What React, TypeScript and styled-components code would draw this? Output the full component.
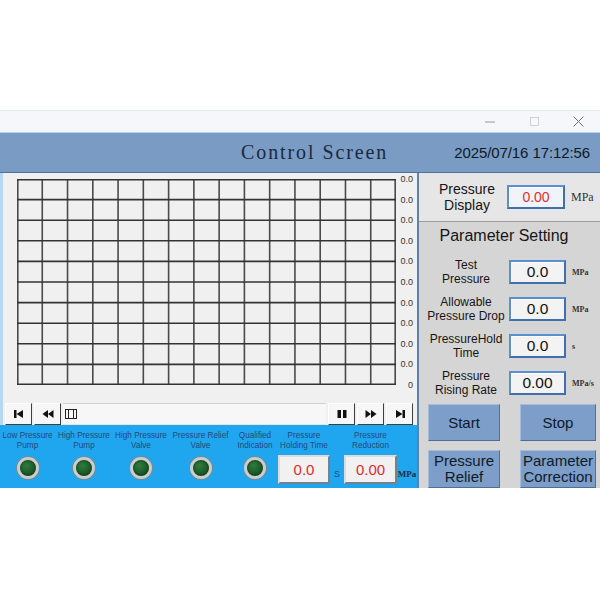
import React from "react"
import styled, { createGlobalStyle } from "styled-components"

const GlobalStyle = createGlobalStyle`
  html, body {
    margin: 0;
    padding: 0;
    background: #fff;
  }
  body {
    font-family: "Liberation Sans", Arial, sans-serif;
  }
  * {
    box-sizing: border-box;
  }
`

const Page = styled.div`
  width: 600px;
  height: 600px;
  padding-top: 110px;
  background: #fff;
  overflow: hidden;
`
const Window = styled.div`
  display: flex;
  flex-flow: column;
  width: 600px;
`
const TitleBar = styled.div`
  display: flex;
  justify-content: flex-end;
  align-items: center;
  height: 23px;
  border-top: 1px solid #e6e9ec;
  border-bottom: 1px solid #bcd2ea;
  background: #f5f7fa;
`
const WinButton = styled.div`
  display: flex;
  justify-content: center;
  align-items: center;
  width: 44px;
  height: 100%;
`
const Header = styled.div`
  display: flex;
  align-items: center;
  height: 40px;
  border-bottom: 1px solid #4f719a;
  background: #7a9bc4;
`
const ScreenTitle = styled.div`
  flex: 1;
  padding-left: 175px;
  color: #1a2a3e;
  font-family: "Liberation Serif", "Times New Roman", serif;
  font-size: 20px;
  letter-spacing: 1.9px;
  text-align: center;
`
const Clock = styled.div`
  padding-right: 10px;
  color: #101820;
  font-size: 15px;
  letter-spacing: -0.1px;
`
const Main = styled.div`
  display: flex;
  height: 315px;
`
const LeftColumn = styled.div`
  display: flex;
  flex-flow: column;
  width: 417px;
`
const ChartPanel = styled.div`
  display: flex;
  flex-flow: column;
  height: 252px;
  padding: 6px 4px 3px 14px;
  border-left: 3px solid #b7d7f2;
  background: #f0f0f0;
`
const ChartBody = styled.div`
  display: flex;
  align-items: flex-start;
`
const YAxis = styled.div`
  display: flex;
  flex-flow: column;
  justify-content: space-between;
  align-items: flex-end;
  width: 14px;
  height: 216px;
  margin-top: -5px;
  margin-left: 3px;
  color: #333;
  font-size: 9px;
  line-height: 10px;
`
const Toolbar = styled.div`
  display: flex;
  align-items: center;
  gap: 2px;
  height: 24px;
  margin-top: 13px;
  margin-left: -12px;
`
const ToolButton = styled.div`
  display: flex;
  justify-content: center;
  align-items: center;
  flex-shrink: 0;
  width: 27px;
  height: 22px;
  border-top: 1px solid #fff;
  border-left: 1px solid #fff;
  border-right: 1px solid #3e3e3e;
  border-bottom: 1px solid #3e3e3e;
  background: #f6f6f6;
`
const Track = styled.div`
  display: flex;
  align-items: center;
  flex: 1;
  height: 22px;
  padding-left: 2px;
  border-top: 1px solid #d2d2d2;
  border-bottom: 1px solid #e4e4e4;
  background: #f7f7f7;
`
const Thumb = styled.div`
  display: flex;
  justify-content: center;
  width: 12px;
  height: 10px;
  border: 1px solid #222;
  background: #fafafa;

  &::after {
    content: "";
    width: 4px;
    height: 100%;
    border-left: 1px solid #222;
    border-right: 1px solid #222;
  }
`
const StatusBar = styled.div`
  display: flex;
  align-items: flex-start;
  height: 63px;
  padding-top: 6px;
  background: #20a6ef;
`
const LampItem = styled.div<{ $width: number }>`
  display: flex;
  flex-flow: column;
  align-items: center;
  flex-shrink: 0;
  width: ${p => p.$width}px;
`
const StatusLabel = styled.div`
  height: 20px;
  color: #24497a;
  font-size: 8.2px;
  line-height: 10px;
  text-align: center;
  white-space: nowrap;
`
const Lamp = styled.div`
  width: 22px;
  height: 22px;
  margin-top: 6px;
  border: 3px solid #c9cdcd;
  border-radius: 50%;
  box-shadow: 0 0 0 1px #7c8a8a, inset 0 0 2px #06200c;
  background: radial-gradient(circle at 40% 35%, #2f7c3d, #1b5727 60%, #123d1b);
`
const ValueItem = styled.div`
  display: flex;
  align-items: flex-end;
  flex-shrink: 0;
`
const ValueColumn = styled.div`
  display: flex;
  flex-flow: column;
  align-items: center;
`
const StatusBox = styled.div<{ $width: number }>`
  display: flex;
  justify-content: center;
  align-items: center;
  width: ${p => p.$width}px;
  height: 29px;
  margin-top: 4px;
  border: 2px solid;
  border-color: #dcdcdc #74828f #74828f #dcdcdc;
  color: #e22c2c;
  font-size: 15px;
  background: #f1f1f1;
`
const StatusUnit = styled.div<{ $width: number; $serif?: boolean }>`
  width: ${p => p.$width}px;
  padding-bottom: 5px;
  color: ${p => (p.$serif ? "#1c2a40" : "#2a4d80")};
  font-family: ${p => (p.$serif ? '"Liberation Serif", "Times New Roman", serif' : '"Liberation Sans", Arial, sans-serif')};
  font-size: 9px;
  font-weight: ${p => (p.$serif ? "bold" : "normal")};
  text-align: center;
`
const Divider = styled.div`
  width: 2px;
  background: #5f80a8;
`
const RightColumn = styled.div`
  display: flex;
  flex-flow: column;
  flex: 1;
`
const DisplaySection = styled.div`
  display: flex;
  align-items: center;
  height: 49px;
  padding-left: 8px;
  border-bottom: 1px solid #9d9d9d;
  background: #e6e6e6;
`
const FieldLabel = styled.div<{ $width: number; $size: number }>`
  width: ${p => p.$width}px;
  color: #151515;
  font-size: ${p => p.$size}px;
  line-height: ${p => p.$size + 2}px;
  text-align: center;
  white-space: nowrap;
`
const FieldBox = styled.div<{ $width: number; $red?: boolean }>`
  display: flex;
  justify-content: center;
  align-items: center;
  width: ${p => p.$width}px;
  height: 24px;
  border: 2px solid;
  border-color: #5a8fd2 #3f6fae #3f6fae #5a8fd2;
  box-shadow: inset 1px 1px 0 #ffffff;
  color: ${p => (p.$red ? "#e1302e" : "#111")};
  font-size: ${p => (p.$red ? 14 : 15.5)}px;
  background: ${p => (p.$red ? "#f0f4f8" : "#f3f3f3")};
`
const FieldUnit = styled.div<{ $size: number }>`
  margin-left: 6px;
  color: #333;
  font-family: "Liberation Serif", "Times New Roman", serif;
  font-size: ${p => p.$size}px;
  font-weight: ${p => (p.$size < 10 ? "bold" : "normal")};
`
const ParamSection = styled.div`
  display: flex;
  flex-flow: column;
  flex: 1;
  padding-top: 4px;
  background: #d5d5d5;
`
const SectionTitle = styled.div`
  padding-right: 11px;
  color: #151515;
  font-size: 16px;
  line-height: 20px;
  text-align: center;
`
const ParamList = styled.div`
  display: flex;
  flex-flow: column;
  gap: 3px;
  margin-top: 9px;
`
const ParamRow = styled.div`
  display: flex;
  align-items: center;
  height: 34px;
  padding-left: 5px;

  > :nth-child(2) {
    margin-left: 1px;
  }
`
const ButtonGrid = styled.div`
  display: grid;
  grid-template-columns: 72px 76px;
  grid-template-rows: 37px 38px;
  column-gap: 20px;
  row-gap: 9px;
  margin-top: 4px;
  padding-left: 9px;
`
const ActionButton = styled.button.attrs({ type: "button" })`
  display: flex;
  justify-content: center;
  align-items: center;
  padding: 0;
  border: 1px solid;
  border-color: #a4bddd #4f6f98 #4f6f98 #a4bddd;
  color: #0f1a28;
  font-family: "Liberation Sans", Arial, sans-serif;
  font-size: 15px;
  line-height: 16px;
  background: #7c9ec8;
`

const lamps = [
  { label: ["Low Pressure", "Pump"], width: 55 },
  { label: ["High Pressure", "Pump"], width: 58 },
  { label: ["High Pressure", "Valve"], width: 56 },
  { label: ["Pressure Relief", "Valve"], width: 63 },
  { label: ["Qualified", "Indication"], width: 46 },
]

const params = [
  { label: ["Test", "Pressure"], value: "0.0", unit: "MPa" },
  { label: ["Allowable", "Pressure Drop"], value: "0.0", unit: "MPa" },
  { label: ["PressureHold", "Time"], value: "0.0", unit: "s" },
  { label: ["Pressure", "Rising Rate"], value: "0.00", unit: "MPa/s" },
]

const axisLabels = ["0.0", "0.0", "0.0", "0.0", "0.0", "0.0", "0.0", "0.0", "0.0", "0.0", "0"]

function Lines({ lines }: { lines: string[] }) {
  return (
    <>
      {lines.map((l, i) => (
        <div key={i}>{l}</div>
      ))}
    </>
  )
}

function ChartGrid() {
  const w = 379
  const h = 206
  const cols = 15
  const rows = 10
  return (
    <svg width={w} height={h} viewBox={`0 0 ${w} ${h}`}>
      <rect x={0} y={0} width={w} height={h} fill="#f0f0f0" />
      {Array.from({ length: cols + 1 }, (_, i) => {
        const x = Math.min(Math.max(i * (w / cols), 0.8), w - 0.8)
        return <line key={"v" + i} x1={x} y1={0} x2={x} y2={h} stroke="#4a4a4a" strokeWidth={1.6} />
      })}
      {Array.from({ length: rows + 1 }, (_, i) => {
        const y = Math.min(Math.max(i * (h / rows), 0.8), h - 0.8)
        return <line key={"h" + i} x1={0} y1={y} x2={w} y2={y} stroke="#333" strokeWidth={1.6} />
      })}
    </svg>
  )
}

// 再生操作のアイコン
function PlayIcon({ kind }: { kind: "first" | "prev" | "pause" | "next" | "last" }) {
  const shapes = {
    first: (
      <>
        <rect x={1} y={1} width={2.5} height={8} />
        <polygon points="10,1 10,9 3.5,5" />
      </>
    ),
    prev: (
      <>
        <polygon points="6,1 6,9 0.5,5" />
        <polygon points="11.5,1 11.5,9 6,5" />
      </>
    ),
    pause: (
      <>
        <rect x={1.5} y={1} width={3.5} height={8} />
        <rect x={7} y={1} width={3.5} height={8} />
      </>
    ),
    next: (
      <>
        <polygon points="0.5,1 0.5,9 6,5" />
        <polygon points="6,1 6,9 11.5,5" />
      </>
    ),
    last: (
      <>
        <polygon points="2,1 2,9 8.5,5" />
        <rect x={8.5} y={1} width={2.5} height={8} />
      </>
    ),
  }
  return (
    <svg width={12} height={10} viewBox="0 0 12 10" fill="#111">
      {shapes[kind]}
    </svg>
  )
}

export default function App() {
  return (
    <Page>
      <GlobalStyle />
      <Window>
        <TitleBar>
          <WinButton>
            <svg width={10} height={2}><line x1={0} y1={1} x2={10} y2={1} stroke="#9a9a9a" /></svg>
          </WinButton>
          <WinButton>
            <svg width={9} height={9}><rect x={0.5} y={0.5} width={8} height={8} fill="none" stroke="#d2d2d2" /></svg>
          </WinButton>
          <WinButton>
            <svg width={11} height={11}>
              <path d="M0.5 0.5 L10.5 10.5 M10.5 0.5 L0.5 10.5" stroke="#6e6e6e" strokeWidth={1} />
            </svg>
          </WinButton>
        </TitleBar>

        <Header>
          <ScreenTitle>Control Screen</ScreenTitle>
          <Clock>2025/07/16 17:12:56</Clock>
        </Header>

        <Main>
          <LeftColumn>
            <ChartPanel>
              <ChartBody>
                <ChartGrid />
                <YAxis>
                  {axisLabels.map((l, i) => (
                    <div key={i}>{l}</div>
                  ))}
                </YAxis>
              </ChartBody>
              <Toolbar>
                <ToolButton><PlayIcon kind="first" /></ToolButton>
                <ToolButton><PlayIcon kind="prev" /></ToolButton>
                <Track><Thumb /></Track>
                <ToolButton><PlayIcon kind="pause" /></ToolButton>
                <ToolButton><PlayIcon kind="next" /></ToolButton>
                <ToolButton><PlayIcon kind="last" /></ToolButton>
              </Toolbar>
            </ChartPanel>

            <StatusBar>
              {lamps.map(({ label, width }) => (
                <LampItem key={label.join(" ")} $width={width}>
                  <StatusLabel><Lines lines={label} /></StatusLabel>
                  <Lamp />
                </LampItem>
              ))}
              <ValueItem>
                <ValueColumn>
                  <StatusLabel><Lines lines={["Pressure", "Holding Time"]} /></StatusLabel>
                  <StatusBox $width={52}>0.0</StatusBox>
                </ValueColumn>
                <StatusUnit $width={14}>S</StatusUnit>
              </ValueItem>
              <ValueItem>
                <ValueColumn>
                  <StatusLabel><Lines lines={["Pressure", "Reduction"]} /></StatusLabel>
                  <StatusBox $width={53}>0.00</StatusBox>
                </ValueColumn>
                <StatusUnit $width={20} $serif>MPa</StatusUnit>
              </ValueItem>
            </StatusBar>
          </LeftColumn>

          <Divider />

          <RightColumn>
            <DisplaySection>
              <FieldLabel $width={80} $size={14}><Lines lines={["Pressure", "Display"]} /></FieldLabel>
              <FieldBox $width={58} $red>0.00</FieldBox>
              <FieldUnit $size={12}>MPa</FieldUnit>
            </DisplaySection>

            <ParamSection>
              <SectionTitle>Parameter Setting</SectionTitle>
              <ParamList>
                {params.map(({ label, value, unit }) => (
                  <ParamRow key={label.join(" ")}>
                    <FieldLabel $width={84} $size={12}><Lines lines={label} /></FieldLabel>
                    <FieldBox $width={57}>{value}</FieldBox>
                    <FieldUnit $size={8}>{unit}</FieldUnit>
                  </ParamRow>
                ))}
              </ParamList>
              <ButtonGrid>
                <ActionButton>Start</ActionButton>
                <ActionButton>Stop</ActionButton>
                <ActionButton>Pressure<br />Relief</ActionButton>
                <ActionButton>Parameter<br />Correction</ActionButton>
              </ButtonGrid>
            </ParamSection>
          </RightColumn>
        </Main>
      </Window>
    </Page>
  )
}
